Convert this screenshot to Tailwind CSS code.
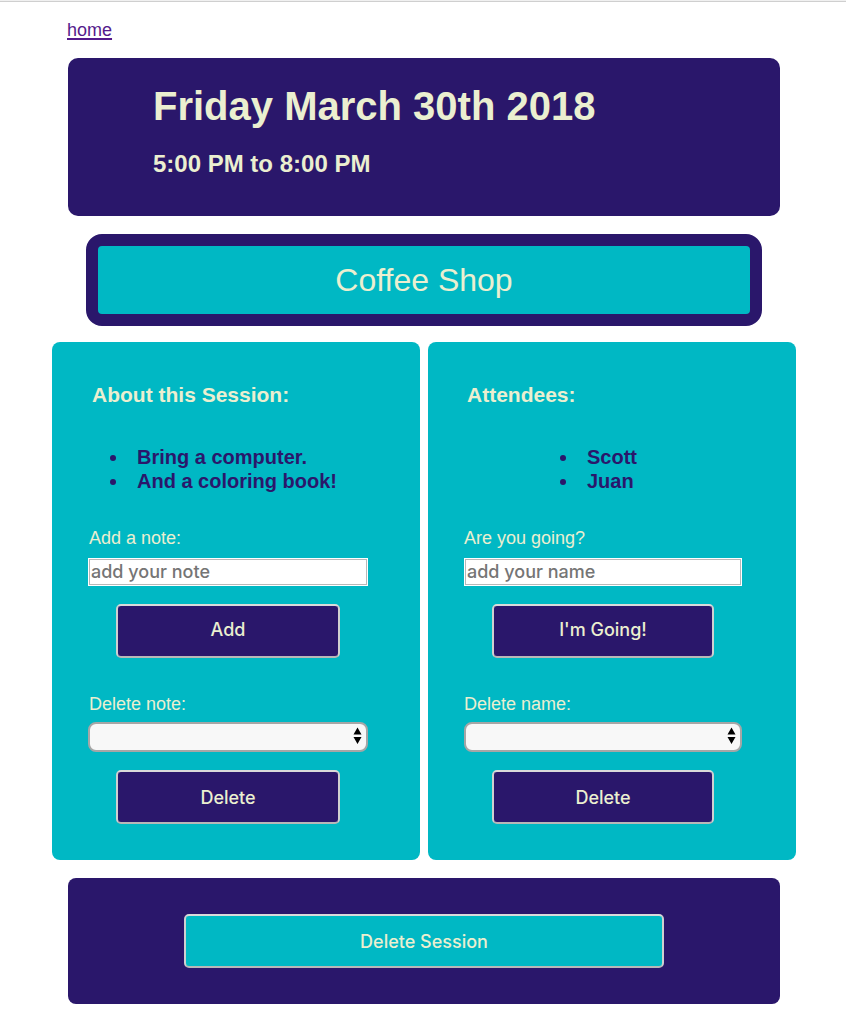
<!DOCTYPE html>
<html lang="en">
<head>
<meta charset="utf-8">
<meta name="viewport" content="width=device-width, initial-scale=1">
<title>Coffee Shop session</title>
<script src="https://cdn.jsdelivr.net/npm/@tailwindcss/browser@4"></script>
</head>
<body class="bg-white font-['Liberation_Sans',Arial,sans-serif] text-lg leading-6 text-[#ebefd0]">
<div class="h-0.5 border-b border-[#cfcfcf] bg-[#f0f0f0]"></div>
<div class="pt-4 pr-[50px] pl-[52px]">
  <nav class="mb-4 flex pr-4 pl-[15px]">
    <a href="#" class="text-[#551a8b] underline decoration-2 underline-offset-2">home</a>
  </nav>

  <header class="mx-4 rounded-[10px] bg-[#2a176b] px-[85px] pt-6 pb-9">
    <h1 class="text-[40px] leading-12 font-bold">Friday March 30th 2018</h1>
    <h2 class="mt-[18px] text-2xl leading-8 font-bold">5:00 PM to 8:00 PM</h2>
  </header>

  <div class="mx-[34px] mt-[18px] rounded-2xl border-12 border-[#2a176b] bg-[#00b8c4] py-3.5 text-center text-[32px] leading-10">Coffee Shop</div>

  <main class="mt-4 grid grid-cols-2 gap-2">
    <section class="rounded-lg bg-[#00b8c4] pt-[41px] pr-[52px] pb-9 pl-9">
      <h3 class="px-1 text-[21px] leading-6 font-bold">About this Session:</h3>
      <ul class="mx-auto mt-[38px] w-fit list-disc pr-2.5 pl-5 text-xl leading-6 font-bold text-[#2a176b]">
        <li class="pl-2">Bring a computer.</li>
        <li class="pl-2">And a coloring book!</li>
      </ul>
      <form class="mt-[33px] flex flex-col">
        <label for="note" class="pl-px">Add a note:</label>
        <input id="note" type="text" placeholder="add your note" class="mt-2 h-7 w-full border border-white bg-white px-0.5 font-[Inter,sans-serif] text-lg font-medium text-black inset-shadow-[0_0_0_1px_#b8b8b8] placeholder:text-[#757575]">
        <button type="button" class="mx-7 mt-[18px] h-[54px] rounded-[5px] border-2 border-[#d0d0d0] border-t-[#dadada] border-b-[#b8b8b8] bg-[#2a176b] pb-0.5 font-[Inter,sans-serif] font-medium">Add</button>
      </form>
      <form class="mt-[34px] flex flex-col">
        <label for="delete-note" class="pl-px">Delete note:</label>
        <div class="relative mt-1.5">
          <select id="delete-note" class="block h-[30px] w-full appearance-none rounded-lg border-2 border-[#a6a6a6] bg-[#f8f8f8] px-2 text-black"><option></option></select>
          <svg class="pointer-events-none absolute top-[5px] right-1.5 h-[18px] w-[9px]" viewBox="0 0 9 18" aria-hidden="true"><path d="M4.500 .5 8.500 7.500h-8zM.5 10h8L4.500 17z" fill="#000"/></svg>
        </div>
        <button type="button" class="mx-7 mt-[18px] h-[54px] rounded-[5px] border-2 border-[#d0d0d0] border-t-[#dadada] border-b-[#b8b8b8] bg-[#2a176b] pt-0.5 font-[Inter,sans-serif] font-medium">Delete</button>
      </form>
    </section>

    <section class="rounded-lg bg-[#00b8c4] pt-[41px] pr-[54px] pb-9 pl-9">
      <h3 class="px-[3px] text-[21px] leading-6 font-bold">Attendees:</h3>
      <ul class="mx-auto mt-[38px] w-fit list-disc pr-2.5 pl-5 text-xl leading-6 font-bold text-[#2a176b]">
        <li class="pl-2">Scott</li>
        <li class="pl-2">Juan</li>
      </ul>
      <form class="mt-[33px] flex flex-col">
        <label for="name">Are you going?</label>
        <input id="name" type="text" placeholder="add your name" class="mt-2 h-7 w-full border border-white bg-white px-0.5 font-[Inter,sans-serif] text-lg font-medium text-black inset-shadow-[0_0_0_1px_#b8b8b8] placeholder:text-[#757575]">
        <button type="button" class="mx-7 mt-[18px] h-[54px] rounded-[5px] border-2 border-[#d0d0d0] border-t-[#dadada] border-b-[#b8b8b8] bg-[#2a176b] pb-0.5 font-[Inter,sans-serif] font-medium">I'm Going!</button>
      </form>
      <form class="mt-[34px] flex flex-col">
        <label for="delete-name">Delete name:</label>
        <div class="relative mt-1.5">
          <select id="delete-name" class="block h-[30px] w-full appearance-none rounded-lg border-2 border-[#a6a6a6] bg-[#f8f8f8] px-2 text-black"><option></option></select>
          <svg class="pointer-events-none absolute top-[5px] right-1.5 h-[18px] w-[9px]" viewBox="0 0 9 18" aria-hidden="true"><path d="M4.500 .5 8.500 7.500h-8zM.5 10h8L4.500 17z" fill="#000"/></svg>
        </div>
        <button type="button" class="mx-7 mt-[18px] h-[54px] rounded-[5px] border-2 border-[#d0d0d0] border-t-[#dadada] border-b-[#b8b8b8] bg-[#2a176b] pt-0.5 font-[Inter,sans-serif] font-medium">Delete</button>
      </form>
    </section>
  </main>

  <footer class="mx-4 mt-[18px] mb-2 flex rounded-lg bg-[#2a176b] px-[116px] py-9">
    <button type="button" class="h-[54px] w-full rounded-[5px] border-2 border-[#d0d0d0] border-t-[#dadada] border-b-[#b8b8b8] bg-[#00b8c4] pt-0.5 font-[Inter,sans-serif] font-medium">Delete Session</button>
  </footer>
</div>
</body>
</html>
